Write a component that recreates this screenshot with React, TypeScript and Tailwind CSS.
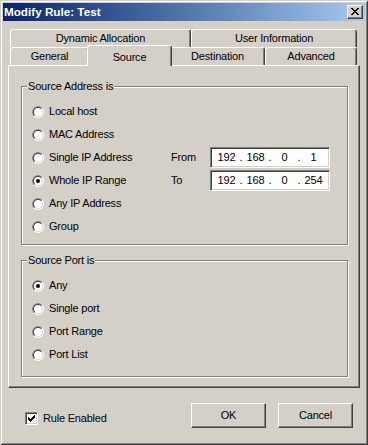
import React, { useId } from "react";

const raised =
  "border border-t-white border-l-white border-r-[#404040] border-b-[#404040] shadow-[inset_-1px_-1px_0_#808080]";
const sunken =
  "border border-t-[#808080] border-l-[#808080] border-r-white border-b-white shadow-[inset_1px_1px_0_#404040,inset_-1px_-1px_0_#d4d0c8] bg-white";

function Radio({ checked }: { checked?: boolean }) {
  const id = "tl" + useId().replace(/[^a-zA-Z0-9]/g, "");
  return (
    <svg width="12" height="12" viewBox="0 0 12 12" className="shrink-0">
      <defs>
        <clipPath id={id}>
          <polygon points="0,0 12,0 0,12" />
        </clipPath>
      </defs>
      <circle cx="6" cy="6" r="6" fill="#fff" />
      <circle cx="6" cy="6" r="6" fill="#808080" clipPath={`url(#${id})`} />
      <circle cx="6" cy="6" r="5" fill="#d4d0c8" />
      <circle cx="6" cy="6" r="5" fill="#404040" clipPath={`url(#${id})`} />
      <circle cx="6" cy="6" r="4" fill="#fff" />
      {checked && <circle cx="6" cy="6" r="2" fill="#000" />}
    </svg>
  );
}

function RadioRow({
  label,
  checked,
  children,
}: {
  label: string;
  checked?: boolean;
  children?: React.ReactNode;
}) {
  return (
    <div className="flex items-center h-[23px]">
      <div className="flex items-center w-[139px]">
        <Radio checked={checked} />
        <span className="ml-[5px]">{label}</span>
      </div>
      {children}
    </div>
  );
}

function IpField({ parts }: { parts: string[] }) {
  return (
    <div className={`${sunken} w-[120px] h-[21px] flex items-center pl-[4px]`}>
      {parts.map((p, i) => (
        <React.Fragment key={i}>
          {i > 0 && <span className="w-[6px] text-center">.</span>}
          <span className="w-[23px] text-center">{p}</span>
        </React.Fragment>
      ))}
    </div>
  );
}

function Group({
  title,
  className,
  children,
}: {
  title: string;
  className?: string;
  children: React.ReactNode;
}) {
  return (
    <div
      className={`relative w-[327px] border border-[#808080] shadow-[1px_1px_0_#fff,inset_1px_1px_0_#fff] pt-[13px] pl-[10px] ${className ?? ""}`}
    >
      <span className="absolute left-[5px] top-[-7px] px-[1px] bg-[#d4d0c8] leading-[13px]">
        {title}
      </span>
      {children}
    </div>
  );
}

function Tab({ label, w }: { label: string; w: string }) {
  return (
    <div
      className={`${w} h-[18px] shrink-0 flex items-center justify-center border-t border-l border-r border-t-white border-l-white border-r-[#404040] rounded-t-[3px] shadow-[inset_-1px_0_0_#808080]`}
    >
      {label}
    </div>
  );
}

function CloseGlyph() {
  const rows = [
    "##....##",
    ".##..##.",
    "..####..",
    "...##...",
    "..####..",
    ".##..##.",
    "##....##",
  ];
  return (
    <svg width="8" height="7" viewBox="0 0 8 7" shapeRendering="crispEdges">
      {rows.flatMap((r, y) =>
        r.split("").map((c, x) =>
          c === "#" ? <rect key={`${x}-${y}`} x={x} y={y} width="1" height="1" fill="#000" /> : null
        )
      )}
    </svg>
  );
}

function CheckGlyph() {
  const rows = [
    "......#",
    ".....##",
    "#...###",
    "##.###.",
    "#####..",
    ".###...",
    "..#....",
  ];
  return (
    <svg width="7" height="7" viewBox="0 0 7 7" shapeRendering="crispEdges">
      {rows.flatMap((r, y) =>
        r.split("").map((c, x) =>
          c === "#" ? <rect key={`${x}-${y}`} x={x} y={y} width="1" height="1" fill="#000" /> : null
        )
      )}
    </svg>
  );
}

export default function App() {
  return (
    <div
      className="w-[368px] h-[445px] bg-[#d4d0c8] p-[3px] flex flex-col text-[11px] text-black tracking-[-0.2px] shadow-[inset_1px_1px_0_#d4d0c8,inset_-1px_-1px_0_#404040,inset_2px_2px_0_#fff,inset_-2px_-2px_0_#808080]"
      style={{ fontFamily: "'Liberation Sans', Arial, sans-serif" }}
    >
      {/* Title bar */}
      <div className="h-[18px] shrink-0 flex items-center bg-linear-to-r from-[#0a246a] to-[#a6caf0]">
        <span className="pl-[1px] text-white font-bold text-[11.7px] tracking-normal">
          Modify Rule: Test
        </span>
        <div className={`${raised} ml-auto mr-[2px] w-[16px] h-[14px] bg-[#d4d0c8] pl-[3px] pt-[2px]`}>
          <CloseGlyph />
        </div>
      </div>

      <div className="px-[5px] flex flex-col">
        {/* Tabs */}
        <div className="mt-[8px] pl-[2px] flex flex-col">
          <div className="flex h-[18px]">
            <Tab label="Dynamic Allocation" w="w-[181px]" />
            <Tab label="User Information" w="w-[166px]" />
          </div>
          <div className="flex h-[18px]">
            <Tab label="General" w="w-[79px]" />
            <div className="relative z-10 -mt-[2px] -mx-[2px] w-[85px] h-[21px] shrink-0 flex justify-center pt-[3px] bg-[#d4d0c8] border-t border-l border-r border-t-white border-l-white border-r-[#404040] rounded-t-[3px] shadow-[inset_-1px_0_0_#808080]">
              Source
            </div>
            <Tab label="Destination" w="w-[95px]" />
            <Tab label="Advanced" w="w-[92px]" />
          </div>
        </div>

        {/* Panel */}
        <div className={`${raised} h-[323px] pt-[20px] pl-[12px] flex flex-col`}>
          <Group title="Source Address is" className="h-[159px]">
            <RadioRow label="Local host" />
            <RadioRow label="MAC Address" />
            <RadioRow label="Single IP Address">
              <span className="w-[39px]">From</span>
              <IpField parts={["192", "168", "0", "1"]} />
            </RadioRow>
            <RadioRow label="Whole IP Range" checked>
              <span className="w-[39px]">To</span>
              <IpField parts={["192", "168", "0", "254"]} />
            </RadioRow>
            <RadioRow label="Any IP Address" />
            <RadioRow label="Group" />
          </Group>
          <Group title="Source Port is" className="h-[117px] mt-[15px]">
            <RadioRow label="Any" checked />
            <RadioRow label="Single port" />
            <RadioRow label="Port Range" />
            <RadioRow label="Port List" />
          </Group>
        </div>

        {/* Bottom */}
        <div className="flex items-start">
          <div className="ml-[17px] mt-[22px] flex items-center">
            <div className={`${sunken} w-[13px] h-[13px] flex items-center justify-center`}>
              <CheckGlyph />
            </div>
            <span className="ml-[5px]">Rule Enabled</span>
          </div>
          <div className="ml-auto mr-[7px] mt-[15px] flex gap-[12px]">
            <div className={`${raised} w-[75px] h-[25px] flex items-center justify-center`}>OK</div>
            <div className={`${raised} w-[75px] h-[25px] flex items-center justify-center`}>Cancel</div>
          </div>
        </div>
      </div>
    </div>
  );
}
